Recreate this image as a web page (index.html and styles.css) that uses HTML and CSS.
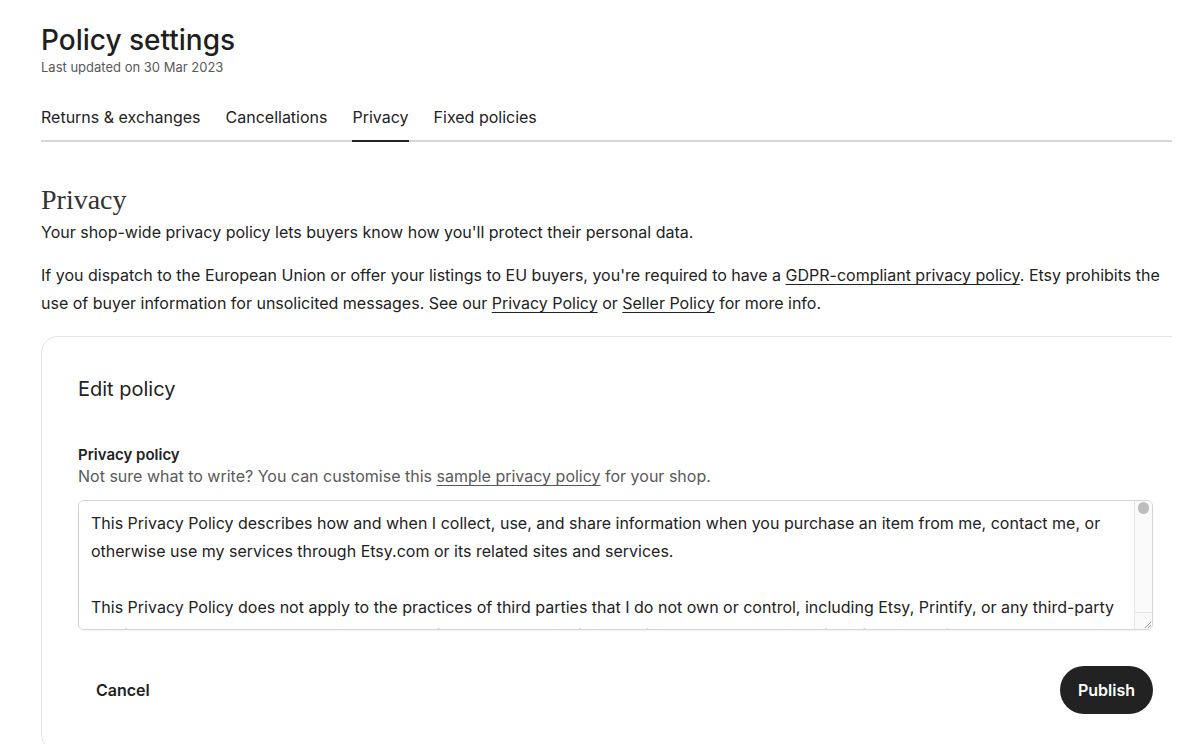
FILE: index.html
```html
<!DOCTYPE html>
<html lang="en">
<head>
<meta charset="utf-8">
<title>Policy settings</title>
<link rel="stylesheet" href="styles.css">
</head>
<body>
<main class="page">
  <header class="page-header">
    <h1 class="page-title">Policy settings</h1>
    <p class="page-meta">Last updated on 30 Mar 2023</p>
  </header>
  <nav class="tabs">
    <a class="tab">Returns &amp; exchanges</a>
    <a class="tab">Cancellations</a>
    <a class="tab tab-active">Privacy</a>
    <a class="tab">Fixed policies</a>
  </nav>
  <section class="section">
    <h2 class="section-title">Privacy</h2>
    <p class="section-lead">Your shop-wide privacy policy lets buyers know how you'll protect their personal data.</p>
    <p class="section-text">If you dispatch to the European Union or offer your listings to EU buyers, you're required to have a <a class="link">GDPR-compliant privacy policy</a>. Etsy prohibits the use of buyer information for unsolicited messages. See our <a class="link">Privacy Policy</a> or <a class="link">Seller Policy</a> for more info.</p>
    <div class="card">
      <h3 class="card-title">Edit policy</h3>
      <label class="field-label" for="policy">Privacy policy</label>
      <p class="field-help">Not sure what to write? You can customise this <a class="link">sample privacy policy</a> for your shop.</p>
      <div class="field-box">
        <textarea id="policy" class="field-input">This Privacy Policy describes how and when I collect, use, and share information when you purchase an item from me, contact me, or otherwise use my services through Etsy.com or its related sites and services.

This Privacy Policy does not apply to the practices of third parties that I do not own or control, including Etsy, Printify, or any third-party services you access through Etsy. You can reference the Etsy Privacy Policy to learn more about its privacy practices.

Information I Collect

To fulfil your order, you must provide me with certain information (which you authorised Etsy to provide to me), such as your name, email address, postal address, payment information, and the details of the product that you’re ordering. You may also choose to provide me with additional personal information (for a custom order of jewellery, for example), if you contact me directly.</textarea>
        <div class="scrollbar" aria-hidden="true">
          <span class="scroll-thumb"></span>
          <span class="scroll-corner">
            <svg width="10" height="10" viewBox="0 0 10 10"><path d="M9 3 L3 9 M9 6 L6 9" stroke="#9a9a9a" stroke-width="1" fill="none"/></svg>
          </span>
        </div>
      </div>
      <div class="card-actions">
        <button class="btn btn-ghost" type="button">Cancel</button>
        <button class="btn btn-primary" type="button">Publish</button>
      </div>
    </div>
  </section>
</main>
</body>
</html>
```

FILE: styles.css
```css
* { box-sizing: border-box; }

html, body {
  margin: 0;
  padding: 0;
  background: #ffffff;
}

body {
  font-family: "Inter", "Liberation Sans", sans-serif;
  color: #222222;
  font-size: 16px;
  line-height: 28px;
}

.page {
  margin: 0 28px 0 41px;
  padding-top: 22px;
  overflow: hidden;
}

.page-header {
  display: flex;
  flex-direction: column;
}

.page-title {
  margin: 0;
  font-size: 28px;
  line-height: 36px;
  font-weight: 500;
  color: #1f1f1f;
}

.page-meta {
  margin: 0;
  font-size: 13px;
  line-height: 18px;
  color: #595959;
}

.tabs {
  display: flex;
  gap: 25px;
  margin-top: 29px;
  border-bottom: 2px solid #d6d6d6;
}

.tab {
  display: block;
  padding: 0 0 11px;
  margin-bottom: -2px;
  font-size: 16px;
  line-height: 24px;
  color: #222222;
  border-bottom: 2px solid transparent;
  cursor: pointer;
}

.tab-active {
  border-bottom-color: #222222;
}

.section {
  padding-top: 41px;
}

.section-title {
  margin: 0;
  font-family: "Liberation Serif", "DejaVu Serif", serif;
  font-size: 28px;
  line-height: 34px;
  font-weight: 400;
  color: #333333;
}

.section-lead {
  margin: 1px 0 0;
  line-height: 28px;
}

.section-text {
  margin: 15px 0 0;
  line-height: 28px;
}

.link {
  color: #222222;
  text-decoration: underline;
  text-underline-offset: 3px;
  text-decoration-thickness: 1px;
  cursor: pointer;
}

.card {
  margin: 19px -18px 0 0;
  padding: 38px 36px 36px;
  border: 1px solid #e4e4e4;
  border-radius: 16px;
  display: flex;
  flex-direction: column;
}

.card-title {
  margin: 0;
  font-size: 20px;
  line-height: 28px;
  font-weight: 400;
  color: #222222;
}

.field-label {
  margin-top: 41px;
  font-size: 15px;
  line-height: 21px;
  font-weight: 600;
  color: #222222;
}

.field-help {
  margin: 0;
  font-size: 16px;
  line-height: 22px;
  color: #595959;
}

.field-help .link {
  color: #595959;
}

.field-box {
  display: flex;
  height: 130px;
  margin-top: 13px;
  border: 1px solid #d4d4d4;
  border-radius: 6px;
  overflow: hidden;
  box-shadow: 0 1px 2px rgba(0,0,0,0.05);
}

.field-input {
  flex: 1;
  display: block;
  min-width: 0;
  height: 100%;
  margin: 0;
  padding: 8px 12px;
  border: none;
  font-family: "Inter", "Liberation Sans", sans-serif;
  font-size: 16px;
  line-height: 28px;
  color: #222222;
  resize: none;
  outline: none;
  overflow: hidden;
  background: #ffffff;
}

.scrollbar {
  width: 18px;
  flex: none;
  display: flex;
  flex-direction: column;
  align-items: center;
  background: #fafafa;
  border-left: 1px solid #e6e6e6;
}

.scroll-thumb {
  display: block;
  width: 11px;
  height: 12px;
  margin-top: 1px;
  border-radius: 6px;
  background: #bdbdbd;
}

.scroll-corner {
  margin-top: auto;
  width: 100%;
  height: 17px;
  border-top: 1px solid #e6e6e6;
  display: flex;
  align-items: flex-end;
  justify-content: flex-end;
}

.scroll-corner svg {
  display: block;
}

.card-actions {
  display: flex;
  justify-content: space-between;
  align-items: center;
  margin-top: 36px;
}

.btn {
  font-family: "Inter", "Liberation Sans", sans-serif;
  font-size: 16px;
  line-height: 24px;
  font-weight: 600;
  border: none;
  cursor: pointer;
}

.btn-ghost {
  background: transparent;
  color: #222222;
  padding: 12px 18px;
}

.btn-primary {
  background: #222222;
  color: #ffffff;
  padding: 12px 18px;
  height: 48px;
  border-radius: 24px;
}
```
